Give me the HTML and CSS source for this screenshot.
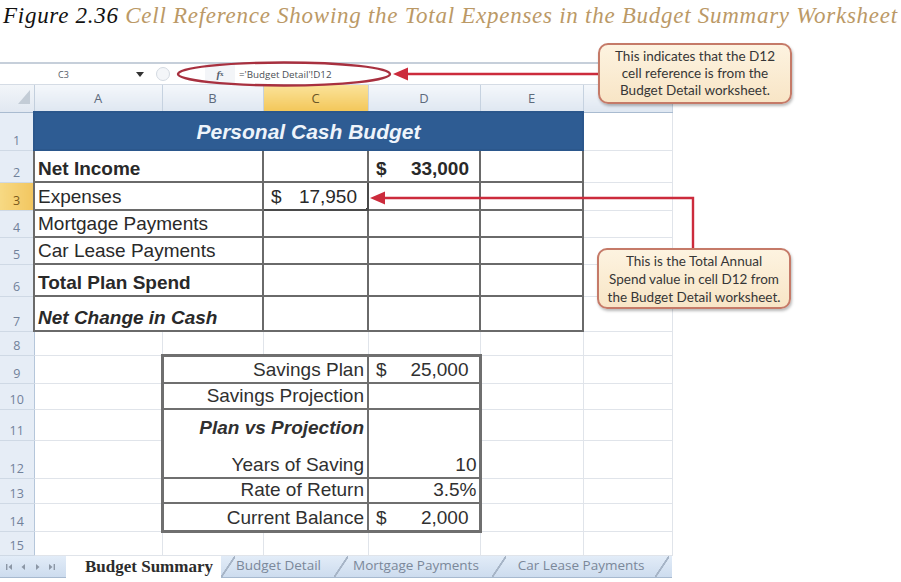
FILE: index.html
```html
<!DOCTYPE html>
<html lang="en">
<head>
<meta charset="utf-8">
<title>Figure 2.36</title>
<link rel="stylesheet" href="styles.css">
</head>
<body>
<div class="page">
  <h1 class="caption"><span class="fig">Figure 2.36</span> <span class="ctitle">Cell Reference Showing the Total Expenses in the Budget Summary Worksheet</span></h1>

  <div class="excel">
    <div class="fbar">
      <div class="namebox"><span class="nb-text">C3</span><span class="nb-arrow"></span></div>
      <div class="fsep"><span class="fcircle"></span></div>
      <div class="fx"><i>f</i><sub>x</sub></div>
      <div class="formula">='Budget Detail'!D12</div>
    </div>

    <table class="sheet">
      <colgroup>
        <col class="w-rh"><col class="w-a"><col class="w-b"><col class="w-c"><col class="w-d"><col class="w-e"><col class="w-f">
      </colgroup>
      <tr class="r-hdr">
        <th class="corner"><span class="tri"></span></th>
        <th class="ch">A</th><th class="ch">B</th><th class="ch sel">C</th><th class="ch">D</th><th class="ch">E</th><th class="ch"></th>
      </tr>
      <tr class="r1">
        <th class="rh">1</th>
        <td colspan="5" class="banner">Personal Cash Budget</td><td></td>
      </tr>
      <tr class="r2">
        <th class="rh">2</th>
        <td colspan="2" class="t1 b">Net Income</td><td class="t1"></td>
        <td class="t1 b"><div class="acct"><span>$</span><span>33,000</span></div></td><td class="t1"></td><td></td>
      </tr>
      <tr class="r3">
        <th class="rh sel">3</th>
        <td colspan="2" class="t1">Expenses</td>
        <td class="t1 active"><div class="acct"><span>$</span><span>17,950</span></div><span class="handle"></span></td>
        <td class="t1"></td><td class="t1"></td><td></td>
      </tr>
      <tr class="r4">
        <th class="rh">4</th>
        <td colspan="2" class="t1">Mortgage Payments</td><td class="t1"></td><td class="t1"></td><td class="t1"></td><td></td>
      </tr>
      <tr class="r5">
        <th class="rh">5</th>
        <td colspan="2" class="t1">Car Lease Payments</td><td class="t1"></td><td class="t1"></td><td class="t1"></td><td></td>
      </tr>
      <tr class="r6">
        <th class="rh">6</th>
        <td colspan="2" class="t1 b">Total Plan Spend</td><td class="t1"></td><td class="t1"></td><td class="t1"></td><td></td>
      </tr>
      <tr class="r7">
        <th class="rh">7</th>
        <td colspan="2" class="t1 bi">Net Change in Cash</td><td class="t1"></td><td class="t1"></td><td class="t1"></td><td></td>
      </tr>
      <tr class="r8">
        <th class="rh">8</th>
        <td></td><td></td><td></td><td></td><td></td><td></td>
      </tr>
      <tr class="r9">
        <th class="rh">9</th>
        <td></td><td colspan="2" class="t2 lbl top">Savings Plan</td>
        <td class="t2 val top"><div class="acct"><span>$</span><span>25,000</span></div></td><td></td><td></td>
      </tr>
      <tr class="r10">
        <th class="rh">10</th>
        <td></td><td colspan="2" class="t2 lbl">Savings Projection</td><td class="t2 val"></td><td></td><td></td>
      </tr>
      <tr class="r11">
        <th class="rh">11</th>
        <td></td><td colspan="2" class="t2 lbl bi open-b">Plan vs Projection</td><td class="t2 val open-b"></td><td></td><td></td>
      </tr>
      <tr class="r12">
        <th class="rh">12</th>
        <td></td><td colspan="2" class="t2 lbl open-t">Years of Saving</td><td class="t2 val num open-t">10</td><td></td><td></td>
      </tr>
      <tr class="r13">
        <th class="rh">13</th>
        <td></td><td colspan="2" class="t2 lbl">Rate of Return</td><td class="t2 val num">3.5%</td><td></td><td></td>
      </tr>
      <tr class="r14">
        <th class="rh">14</th>
        <td></td><td colspan="2" class="t2 lbl bot">Current Balance</td>
        <td class="t2 val bot"><div class="acct"><span>$</span><span>2,000</span></div></td><td></td><td></td>
      </tr>
      <tr class="r15">
        <th class="rh">15</th>
        <td></td><td></td><td></td><td></td><td></td><td></td>
      </tr>
    </table>

    <div class="tabs">
      <div class="tabnav">
        <svg width="60" height="22" viewBox="0 0 60 22" aria-hidden="true">
          <g fill="#8c97a6">
            <rect x="6" y="8" width="1.4" height="6"/><polygon points="12,8 12,14 8.5,11"/>
            <polygon points="25,8 25,14 21.5,11"/>
            <polygon points="36,8 36,14 39.5,11"/>
            <polygon points="49,8 49,14 52.5,11"/><rect x="53.6" y="8" width="1.4" height="6"/>
          </g>
        </svg>
      </div>
      <div class="tab active">Budget Summary</div>
      <span class="tsep"></span>
      <div class="tab t2n">Budget Detail</div>
      <span class="tsep"></span>
      <div class="tab t3n">Mortgage Payments</div>
      <span class="tsep"></span>
      <div class="tab t4n">Car Lease Payments</div>
      <span class="tsep"></span>
    </div>
  </div>

  <svg class="annot" width="901" height="582" viewBox="0 0 901 582" aria-hidden="true">
    <ellipse cx="284" cy="74" rx="106" ry="11.5" fill="none" stroke="#a8303f" stroke-width="2.4"/>
    <line x1="600" y1="74" x2="404" y2="74" stroke="#cc2b3c" stroke-width="2.4"/>
    <polygon points="393,74 408,67.5 408,80.5" fill="#cc2b3c"/>
    <polyline points="693,249 693,198 381,198" fill="none" stroke="#cc2b3c" stroke-width="2.4"/>
    <polygon points="370,198 385,191.5 385,204.5" fill="#cc2b3c"/>
  </svg>

  <div class="callout c1">This indicates that the D12<br>cell reference is from the<br>Budget Detail worksheet.</div>
  <div class="callout c2">This is the Total Annual<br>Spend value in cell D12 from<br>the Budget Detail worksheet.</div>
</div>
</body>
</html>
```

FILE: styles.css
```css
* { box-sizing: border-box; }

html, body {
  margin: 0;
  padding: 0;
  background: #ffffff;
}

body {
  width: 901px;
  height: 582px;
  overflow: hidden;
}

.page {
  position: relative;
  width: 901px;
  height: 582px;
}

/* ---------- caption ---------- */
.caption {
  margin: 0;
  height: 40px;
  padding: 2px 0 0 3px;
  font-family: "Liberation Serif", "DejaVu Serif", serif;
  font-style: italic;
  font-weight: 400;
  font-size: 23px;
  line-height: 28px;
  letter-spacing: 0.73px;
  white-space: nowrap;
}

.fig { color: #111111; }
.ctitle { color: #bb9966; }

/* ---------- excel window ---------- */
.excel {
  margin-top: 22px;
  width: 672px;
}

.fbar {
  display: flex;
  align-items: center;
  height: 23px;
  border-top: 2px solid #c6cfda;
  border-bottom: 1px solid #d5dce5;
  background: #ffffff;
  font-family: "Open Sans", "Liberation Sans", sans-serif;
}

.namebox {
  width: 152px;
  height: 100%;
  display: flex;
  align-items: center;
  padding-left: 58px;
}

.nb-text {
  font-size: 9px;
  color: #555d68;
  width: 78px;
}

.nb-arrow {
  width: 0;
  height: 0;
  border-left: 4px solid transparent;
  border-right: 4px solid transparent;
  border-top: 5px solid #333;
}

.fsep {
  width: 53px;
  height: 100%;
  display: flex;
  align-items: center;
  padding-left: 4px;
}

.fcircle {
  width: 14px;
  height: 14px;
  border-radius: 50%;
  border: 1px solid #d4dae2;
  background: #f4f6f9;
}

.fx {
  width: 30px;
  height: 100%;
  display: flex;
  align-items: center;
  justify-content: center;
  background: #f3f5f8;
  font-family: "Liberation Serif", serif;
  font-weight: 700;
  font-size: 11px;
  color: #55606e;
}

.fx sub { font-size: 7px; }

.formula {
  padding-left: 4px;
  font-size: 9.8px;
  color: #4b4f55;
  white-space: nowrap;
}

/* ---------- grid ---------- */
.sheet {
  border-collapse: collapse;
  table-layout: fixed;
  width: 672px;
  font-family: "Liberation Sans", Arial, sans-serif;
  font-size: 19px;
  color: #292929;
}

.w-rh { width: 34px; }
.w-a { width: 128px; }
.w-b { width: 101px; }
.w-c { width: 105px; }
.w-d { width: 112px; }
.w-e { width: 103px; }
.w-f { width: 89px; }

.sheet td {
  border: 1px solid #e0e4ea;
  padding: 0 3px 2px 3px;
  vertical-align: bottom;
  white-space: nowrap;
  overflow: hidden;
  line-height: 21px;
}

.sheet th {
  padding: 0;
  font-weight: 400;
}

.r-hdr { height: 27px; }
.r1 { height: 38px; }
.r2 { height: 32px; }
.r3 { height: 28px; }
.r4 { height: 27px; }
.r5 { height: 27px; }
.r6 { height: 32px; }
.r7 { height: 35px; }
.r8 { height: 24px; }
.r9 { height: 28px; }
.r10 { height: 26px; }
.r11 { height: 31px; }
.r12 { height: 38px; }
.r13 { height: 25px; }
.r14 { height: 28px; }
.r15 { height: 24px; }

.corner {
  background: linear-gradient(#f2f5f9, #e1e8f1);
  border-right: 1px solid #c3cfdd;
  border-bottom: 1px solid #a9bbd0;
  text-align: right;
  vertical-align: bottom;
}

.tri {
  display: inline-block;
  width: 0;
  height: 0;
  margin: 0 4px 3px 0;
  border-left: 12px solid transparent;
  border-bottom: 14px solid #c3ccd6;
}

.ch {
  background: linear-gradient(#f4f7fb, #dfe7f1);
  border-right: 1px solid #c6d2e0;
  border-bottom: 1px solid #a9bbd0;
  font-family: "Open Sans", "Liberation Sans", sans-serif;
  font-size: 13px;
  color: #5d6a7c;
  text-align: center;
  vertical-align: middle;
}

.ch.sel {
  background: linear-gradient(#fbe39a, #f3c75a);
  border-bottom-color: #c9a13f;
  color: #6a5626;
}

.rh {
  background: #e6edf6;
  border-right: 1px solid #b5c6da;
  border-bottom: 1px solid #cfd9e5;
  font-family: "Open Sans", "Liberation Sans", sans-serif;
  font-size: 12.5px;
  line-height: 16px;
  color: #71819a;
  text-align: center;
  vertical-align: bottom;
  padding-bottom: 1px !important;
}

.rh.sel {
  background: linear-gradient(90deg, #f7d983, #f2c660);
  color: #7a5a1c;
}

/* banner */
.sheet td.banner {
  background: #2e5c93;
  border: 2px solid #2b578c;
  color: #eef4fb;
  font-weight: 700;
  font-style: italic;
  font-size: 21px;
  text-align: center;
  vertical-align: middle;
  padding: 0;
}

/* table 1 */
.sheet td.t1 {
  border: 2px solid #6a6a6a;
}

.b { font-weight: 700; }
.bi { font-weight: 700; font-style: italic; }

.acct {
  display: flex;
  justify-content: space-between;
  padding: 0 7px 0 4px;
}

.sheet td.active {
  position: relative;
  border: 2px solid #4a4a4a;
}

.handle {
  position: absolute;
  right: -4px;
  bottom: -4px;
  width: 6px;
  height: 6px;
  background: #3a3a3a;
  border: 1px solid #ffffff;
}

/* table 2 */
.sheet td.t2 {
  border: 2px solid #6f6f6f;
  border-left-width: 3px;
  border-right-width: 3px;
}

.sheet td.t2.lbl {
  text-align: right;
  padding-right: 3px;
  color: #303030;
  border-right-width: 2px;
}

.sheet td.t2.val {
  border-left-width: 2px;
  color: #303030;
}

.sheet td.t2.top { border-top-width: 3px; }
.sheet td.t2.bot { border-bottom-width: 3px; }
.sheet td.t2.open-b { border-bottom: none; }
.sheet td.t2.open-t { border-top: none; }

.sheet td.num {
  text-align: right;
  padding-right: 2px;
}

/* ---------- sheet tabs ---------- */
.tabs {
  display: flex;
  align-items: stretch;
  height: 22px;
  width: 672px;
  background: linear-gradient(#e2ecf8, #cddcee);
  border-bottom: 1px solid #a7b9cf;
  font-family: "Open Sans", "Liberation Sans", sans-serif;
  font-size: 13.5px;
  color: #7b889a;
}

.tabnav {
  width: 66px;
  flex: none;
}

.tab {
  display: flex;
  align-items: center;
  white-space: nowrap;
  line-height: 1;
  padding: 0 13px 0 1px;
}

.tab.active {
  background: #ffffff;
  color: #2c2c2c;
  font-family: "Liberation Serif", serif;
  font-weight: 700;
  font-size: 17px;
  padding: 0 8px 0 19px;
  border-bottom: 1px solid #ffffff;
  margin-bottom: -1px;
}

.tab.t3n { padding-left: 5px; }
.tab.t4n { padding-left: 12px; padding-right: 10px; }

.tsep {
  width: 14px;
  flex: none;
  background: linear-gradient(to bottom right, transparent 46%, #a6b4c6 48%, #a6b4c6 54%, transparent 56%);
}

/* ---------- annotations ---------- */
.annot {
  position: absolute;
  left: 0;
  top: 0;
  pointer-events: none;
}

.callout {
  position: absolute;
  width: 194px;
  height: 61px;
  border: 2px solid #c57a68;
  border-radius: 10px;
  background: linear-gradient(#fdf3e0, #f8e5c6);
  box-shadow: 1px 2px 3px rgba(0, 0, 0, 0.28);
  font-family: "Lato", "Open Sans", sans-serif;
  font-size: 13.5px;
  color: #363636;
  text-align: center;
  display: flex;
  align-items: center;
  justify-content: center;
}

.c1 {
  left: 598px;
  top: 43px;
  line-height: 17px;
}

.c2 {
  left: 597px;
  top: 248px;
  line-height: 18px;
}
```
